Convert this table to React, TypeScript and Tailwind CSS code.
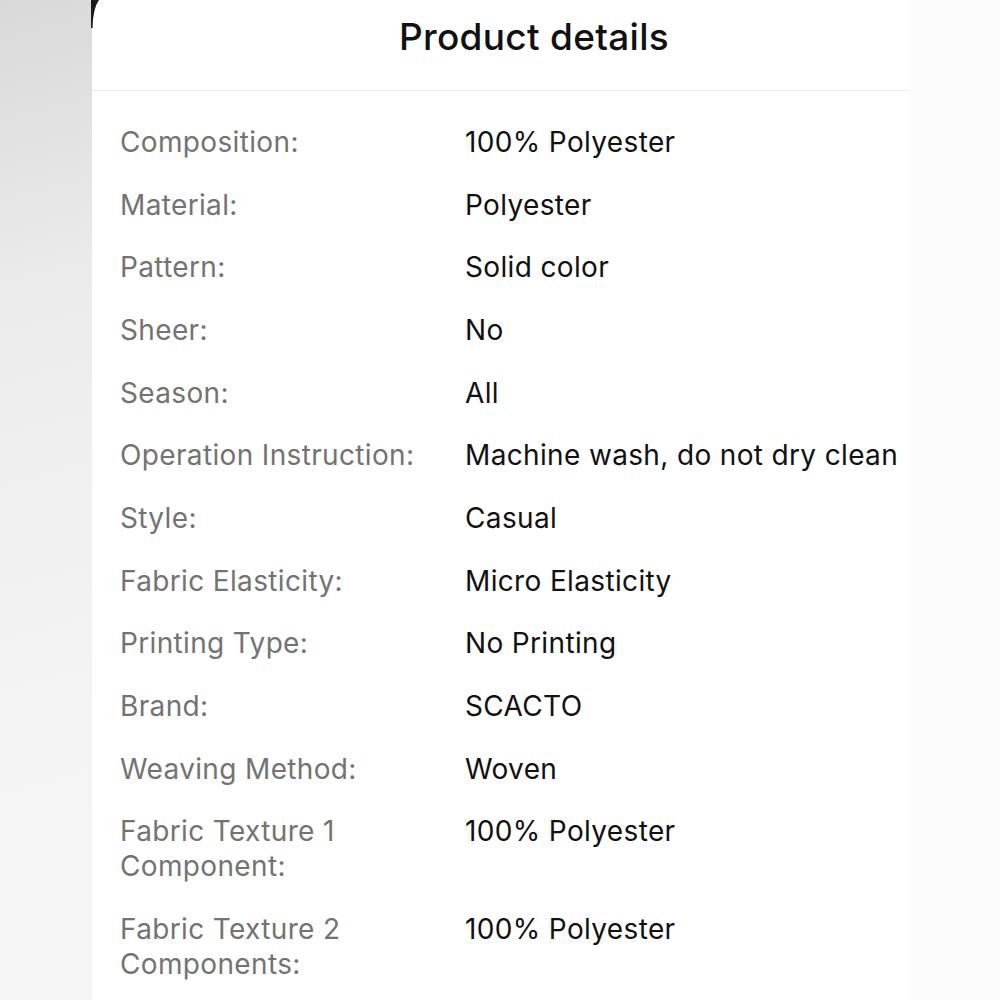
const rows: [string, string][] = [
	["Composition:", "100% Polyester"],
	["Material:", "Polyester"],
	["Pattern:", "Solid color"],
	["Sheer:", "No"],
	["Season:", "All"],
	["Operation Instruction:", "Machine wash, do not dry clean"],
	["Style:", "Casual"],
	["Fabric Elasticity:", "Micro Elasticity"],
	["Printing Type:", "No Printing"],
	["Brand:", "SCACTO"],
	["Weaving Method:", "Woven"],
	["Fabric Texture 1 Component:", "100% Polyester"],
	["Fabric Texture 2 Components:", "100% Polyester"],
];

export default function App() {
	return (
		<div className="flex h-[1000px] w-[1000px] overflow-hidden font-['Inter',sans-serif]">
			<div className="w-[92px] shrink-0 bg-[linear-gradient(165deg,#d9d9d9_0%,#ececec_30%,#f4f4f4_70%,#f6f6f6_100%)]" />
			<div className="relative w-[816px] shrink-0 bg-white">
				{/* phone edge peeking in at the top corner */}
				<svg className="absolute -left-[1px] top-0" width="9" height="28" viewBox="0 0 9 28">
					<path d="M0 0 L8 0 Q2 8 1.5 28 L0 28 Z" fill="#1a1a1a" />
				</svg>
				<header className="flex h-[91px] justify-center border-b border-[#ececec] pt-[15px] pl-[68px]">
					<h1 className="text-[37px] leading-[44px] font-medium tracking-[0.3px] text-[#111]">Product details</h1>
				</header>
				<dl className="pt-[20px] pl-[28px] pr-[8px]">
					{rows.map(([label, value]) => (
						<div key={label} className="grid grid-cols-[345px_1fr] py-[13.85px] text-[28px] leading-[35px] tracking-[0.35px]">
							<dt className="pr-[16px] text-[#737373]">{label}</dt>
							<dd className="text-[#111]">{value}</dd>
						</div>
					))}
				</dl>
			</div>
			<div className="flex-1 bg-[#fcfcfc]" />
		</div>
	);
}
